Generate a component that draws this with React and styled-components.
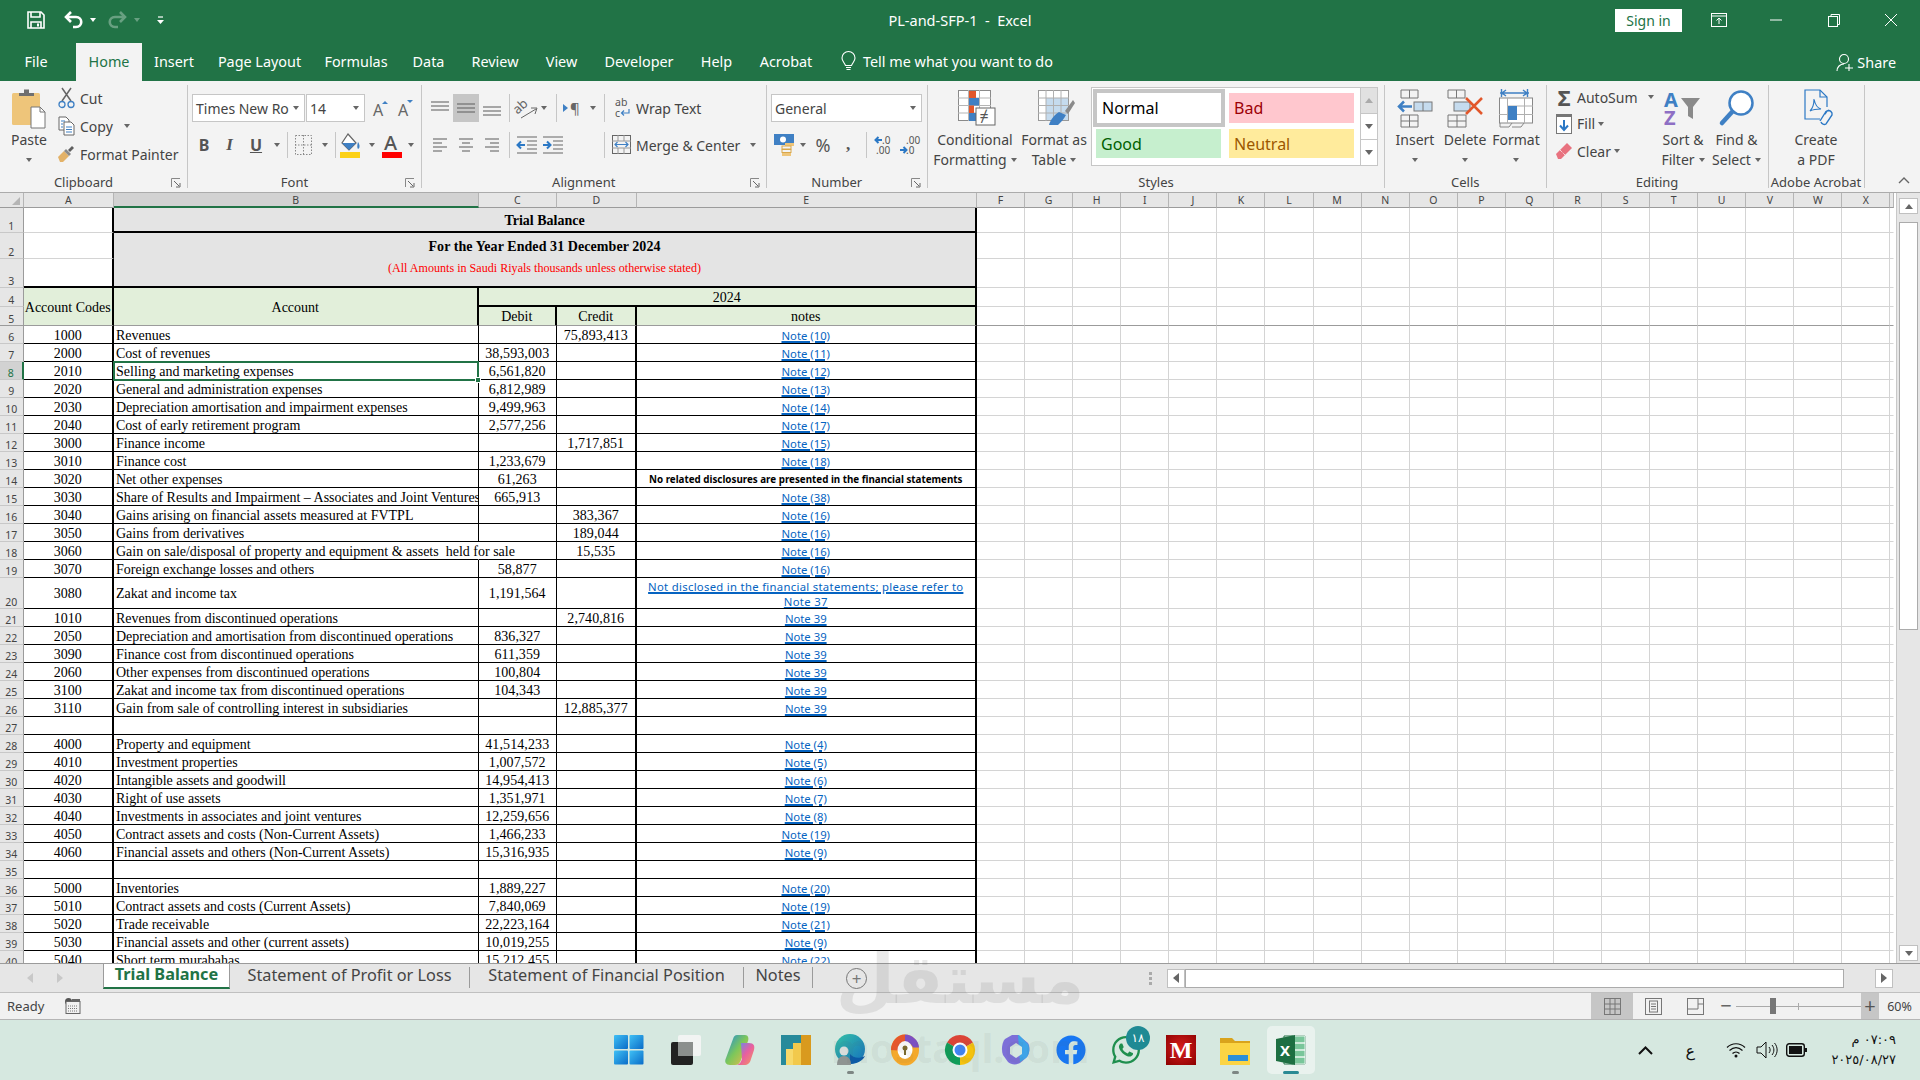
import React from 'react'
import styled, { createGlobalStyle } from 'styled-components'
import { FaFacebook, FaWhatsapp } from 'react-icons/fa'

const UI = `"Noto Sans", "Open Sans", sans-serif`
const SERIF = `"Liberation Serif", "Times New Roman", serif`
const GREEN = '#217346'

const Global = createGlobalStyle`
	html, body { margin: 0; padding: 0; background: #fff; overflow: hidden; }
	#root { width: 1920px; height: 1080px; }
	* { box-sizing: border-box; }
`

const Frame = styled.div`
	position: relative;
	width: 1920px;
	height: 1080px;
	overflow: hidden;
	display: flex;
	flex-direction: column;
	font-family: ${UI};
	color: #444;
`

/* ---------- title bar ---------- */

const TitleBar = styled.header`
	height: 43px;
	flex: none;
	padding-bottom: 3px;
	background: ${GREEN};
	display: grid;
	grid-template-columns: 1fr auto 1fr;
	align-items: center;
	color: #fff;
`
const Qat = styled.div`
	display: flex;
	align-items: center;
	padding-left: 24px;
`
const QatBtn = styled.div`
	width: ${p => p.$w}px;
	margin-left: ${p => p.$ml || 0}px;
	display: flex;
	justify-content: center;
	align-items: center;
	opacity: ${p => (p.$dim ? 0.32 : 1)};
`
const TitleText = styled.div`
	font-size: 14.5px;
	white-space: pre;
`
const WindowBar = styled.div`
	display: flex;
	justify-content: flex-end;
	align-items: center;
`
const SignIn = styled.div`
	width: 67px;
	height: 23px;
	margin-right: 8px;
	background: #fff;
	color: ${GREEN};
	font-size: 14px;
	display: flex;
	align-items: center;
	justify-content: center;
`
const WinBtn = styled.div`
	width: 57.5px;
	display: flex;
	justify-content: center;
`

/* ---------- ribbon tabs ---------- */

const TabBar = styled.nav`
	height: 38px;
	flex: none;
	background: ${GREEN};
	display: flex;
	align-items: stretch;
	color: #fff;
	font-size: 14.4px;
`
const RibbonTab = styled.div`
	width: ${p => p.$w}px;
	padding: 0 ${p => p.$pr || 0}px 2px 0;
	display: flex;
	align-items: center;
	justify-content: center;
	background: ${p => (p.$active ? '#f3f3f3' : 'transparent')};
	color: ${p => (p.$active ? GREEN : '#fff')};
`
const TellMe = styled.div`
	display: flex;
	align-items: center;
	gap: 7px;
	margin-left: 15px;
	padding-bottom: 2px;
`
const Share = styled.div`
	margin-left: auto;
	margin-right: 24px;
	display: flex;
	align-items: center;
	gap: 3px;
	padding-top: 1px;
`

/* ---------- ribbon ---------- */

const Ribbon = styled.div`
	height: 112px;
	flex: none;
	background: #f3f3f3;
	border-bottom: 1px solid #ababab;
	display: flex;
	padding-top: 4px;
	font-size: 14px;
	color: #444;
`
const Group = styled.section`
	flex: none;
	width: ${p => p.$w}px;
	height: 103px;
	border-right: 1px solid #c6c6c6;
	display: flex;
	flex-direction: column;
`
const GroupBody = styled.div`
	flex: 1;
	min-height: 0;
	display: flex;
	padding-left: ${p => p.$pl || 0}px;
`
const GroupLabel = styled.div`
	position: relative;
	height: 18px;
	margin-bottom: -3px;
	padding-right: ${p => (p.$launcher ? 20 : 0)}px;
	text-align: center;
	font-size: 13px;
	line-height: 18px;
	white-space: nowrap;
`
const Launcher = styled.svg`
	position: absolute;
	right: 6px;
	top: 5px;
`
const Large = styled.div`
	flex: none;
	width: ${p => p.$w}px;
	display: flex;
	flex-direction: column;
	align-items: center;
	padding-top: 3px;
	line-height: 20px;
	white-space: nowrap;
`
const LargeIcon = styled.div`
	height: 40px;
	margin-bottom: 2px;
	padding-left: ${p => p.$pl || 0}px;
	display: flex;
	align-items: center;
	justify-content: center;
`
const TextLine = styled.div`
	height: 20px;
	display: flex;
	align-items: center;
	gap: 4px;
`
const SmallStack = styled.div`
	flex: none;
	width: ${p => p.$w}px;
	margin-top: -1px;
	padding-left: ${p => p.$pl}px;
	display: flex;
	flex-direction: column;
`
const SmallBtn = styled.div`
	height: ${p => p.$h || 28}px;
	margin-left: ${p => p.$ml || 0}px;
	display: flex;
	align-items: center;
	white-space: nowrap;
`
const SmallIcon = styled.div`
	width: 16px;
	margin-right: ${p => p.$mr ?? 6}px;
	display: flex;
	justify-content: center;
`
const Rows = styled.div`
	display: flex;
	flex-direction: column;
	padding-top: 9px;
	gap: 10px;
`
const Row = styled.div`
	height: ${p => p.$h}px;
	display: flex;
	align-items: center;
`
const Cell = styled.div`
	flex: none;
	width: ${p => p.$w}px;
	height: 100%;
	margin-left: ${p => p.$ml || 0}px;
	display: flex;
	align-items: center;
	justify-content: center;
	background: ${p => (p.$on ? '#c6c6c6' : 'transparent')};
`
const VSep = styled.div`
	flex: none;
	width: 1px;
	height: 100%;
	margin: 0 ${p => p.$mr || 0}px 0 ${p => p.$ml || 0}px;
	background: #c6c6c6;
`
const Caret = styled.span`
	flex: none;
	display: inline-block;
	width: 0;
	height: 0;
	margin-left: ${p => p.$ml || 0}px;
	margin-right: ${p => p.$mr || 0}px;
	border-left: 3.5px solid transparent;
	border-right: 3.5px solid transparent;
	border-top: 4px solid ${p => p.$color || '#666'};
`
const CaretCell = styled.div`
	flex: none;
	width: ${p => p.$w}px;
	display: flex;
	justify-content: center;
`
const Field = styled.div`
	flex: none;
	width: ${p => p.$w}px;
	height: 28px;
	margin-left: ${p => p.$ml || 0}px;
	background: #fff;
	border: 1px solid #c6c6c6;
	display: flex;
	align-items: center;
	justify-content: space-between;
	padding: 0 5px 0 3px;
	font-size: 14px;
`
const Glyph = styled.span`
	font-family: ${p => p.$serif ? SERIF : UI};
	font-weight: ${p => p.$bold ? 700 : 400};
	font-style: ${p => p.$italic ? 'italic' : 'normal'};
	text-decoration: ${p => p.$under ? 'underline' : 'none'};
	font-size: ${p => p.$size || 15}px;
	color: ${p => p.$color || '#555'};
`
const Gallery = styled.div`
	flex: none;
	width: 287px;
	height: 79px;
	margin: 2px 0 0 5px;
	border: 1px solid #c6c6c6;
	background: #fff;
	display: grid;
	grid-template-columns: 133px 135px 17px;
	grid-template-rows: 39px 38px;
`
const StyleCell = styled.div`
	padding: ${p => p.$pad};
	display: flex;
`
const StyleChip = styled.div`
	flex: 1;
	display: flex;
	align-items: center;
	padding-left: ${p => p.$pl || 5}px;
	font-size: 16px;
	background: ${p => p.$bg};
	color: ${p => p.$color};
	border: ${p => (p.$selected ? '4px solid #c6c6c6' : 'none')};
`
const GalleryScroll = styled.div`
	grid-column: 3;
	grid-row: 1 / span 2;
	border-left: 1px solid #c6c6c6;
	display: flex;
	flex-direction: column;
`
const GalleryBtn = styled.div`
	flex: 1;
	display: flex;
	align-items: center;
	justify-content: center;
	background: ${p => (p.$dim ? '#e1e1e1' : '#fff')};
	border-bottom: ${p => (p.$last ? 'none' : '1px solid #c6c6c6')};
`
const CollapseArea = styled.div`
	flex: 1;
	height: 103px;
	display: flex;
	align-items: flex-end;
	justify-content: flex-end;
	padding: 0 10px 4px 0;
`

/* ---------- sheet ---------- */

const SheetArea = styled.div`
	height: 770px;
	flex: none;
	display: flex;
	overflow: hidden;
	background: #fff;
`
const SheetGrid = styled.div`
	flex: none;
	width: 1896px;
	display: grid;
	grid-template-columns: 23.5px 90.5px 364.5px 78.5px 79.5px 340.5px repeat(19, 48.08px) 4px;
	grid-template-rows: 15px 25px 26px 29px 19px 19px repeat(14, 18px) 31px repeat(20, 18px);
	font-family: ${SERIF};
	font-size: 14px;
	color: #000;
`
const line = {
	grid: '1px solid #d4d4d4',
	thin: '1px solid #000',
	thick: '2px solid #000',
	none: '1px solid transparent',
	freeze: '1px solid #9b9b9b'
}
const Cols = styled.div`
	background: ${p => (p.$on ? '#d2d2d2' : '#e6e6e6')};
	border-right: 1px solid #b5b5b5;
	border-bottom: ${p => (p.$on ? `2px solid ${GREEN}` : '1px solid #9b9b9b')};
	color: #444;
	font-family: ${UI};
	font-size: 10.5px;
	display: flex;
	align-items: center;
	justify-content: center;
	overflow: hidden;
`
const Corner = styled(Cols)`
	align-items: flex-end;
	justify-content: flex-end;
	padding: 0 3px 2px 0;
`
const RowHead = styled.div`
	background: ${p => (p.$on ? '#d2d2d2' : '#e6e6e6')};
	border-right: ${p => (p.$on ? `2px solid ${GREEN}` : '1px solid #9b9b9b')};
	border-bottom: ${p => (p.$freeze ? line.freeze : '1px solid #c8c8c8')};
	color: ${p => (p.$on ? GREEN : '#444')};
	font-family: ${UI};
	font-size: 10.5px;
	line-height: 12px;
	display: flex;
	align-items: flex-end;
	justify-content: center;
`
const SheetCell = styled.div`
	position: relative;
	min-width: 0;
	grid-column: ${p => (p.$cols ? `span ${p.$cols}` : 'auto')};
	grid-row: ${p => (p.$rows ? `span ${p.$rows}` : 'auto')};
	background: ${p => p.$bg || 'transparent'};
	border-right: ${p => line[p.$r || 'grid']};
	border-bottom: ${p => line[p.$b || 'grid']};
	display: flex;
	align-items: center;
	justify-content: ${p => (p.$left ? 'flex-start' : 'center')};
	padding: 2px 0 0 ${p => (p.$left ? 2 : 0)}px;
	font-weight: ${p => (p.$bold ? 700 : 400)};
	letter-spacing: ${p => (p.$num ? '0.1px' : '0')};
	white-space: pre;
	overflow: ${p => (p.$spill ? 'visible' : 'hidden')};
	z-index: ${p => (p.$spill ? 2 : 'auto')};
`
const SelectedCell = styled(SheetCell)`
	overflow: visible;
	z-index: 3;
`
const SelectionBox = styled.div`
	position: absolute;
	inset: -1px -1px -2px -1px;
	border: 2px solid ${GREEN};
	pointer-events: none;
`
const Handle = styled.div`
	position: absolute;
	right: -4px;
	bottom: -4px;
	width: 6px;
	height: 6px;
	background: ${GREEN};
	border: 1px solid #fff;
`
const TitleBlock = styled(SheetCell)`
	flex-direction: column;
	justify-content: flex-start;
	padding-top: 0;
`
const YearLine = styled.div`
	height: 26px;
	line-height: 27px;
	font-weight: 700;
	font-size: 14px;
	letter-spacing: 0.07px;
`
const AmountLine = styled.div`
	height: 18px;
	line-height: 18px;
	font-size: 12.1px;
	color: #f00;
`
const NoteLink = styled.span`
	font-family: ${UI};
	font-size: 11.3px;
	line-height: 15px;
	letter-spacing: ${p => (p.$wide ? '0.3px' : '0')};
	color: #0563c1;
	text-decoration: underline;
	text-decoration-thickness: 1.5px;
	text-underline-offset: 1px;
	text-align: center;
`
const NoteBold = styled.span`
	font-family: ${UI};
	font-size: 9.8px;
	font-weight: 700;
	color: #000;
`
const VScroll = styled.div`
	flex: 1;
	background: #e6e6e6;
	border-left: 1px solid #c8c8c8;
	display: flex;
	flex-direction: column;
	align-items: center;
	padding: 5px 0 2px 0;
`
const ScrollBtn = styled.div`
	flex: none;
	width: 19px;
	height: 16px;
	background: #fff;
	border: 1px solid #c0c0c0;
	display: flex;
	align-items: center;
	justify-content: center;
`
const VThumb = styled.div`
	flex: none;
	width: 19px;
	height: 408px;
	margin-top: 8px;
	background: #fff;
	border: 1px solid #ababab;
`
const Spacer = styled.div`
	flex: 1;
`

/* ---------- sheet tabs ---------- */

const SheetTabs = styled.div`
	height: 30px;
	flex: none;
	background: #e6e6e6;
	border-top: 1px solid #9b9b9b;
	border-bottom: 1px solid #c0c0c0;
	display: flex;
	align-items: center;
	font-size: 16.3px;
	color: #444;
`
const NavArrows = styled.div`
	width: 103px;
	flex: none;
	display: flex;
	justify-content: center;
	gap: 24px;
	padding-right: 14px;
`
const ActiveSheet = styled.div`
	width: 127px;
	height: 25px;
	align-self: flex-start;
	padding-bottom: 3px;
	background: #fff;
	border-left: 1px solid #9b9b9b;
	border-right: 1px solid #9b9b9b;
	border-bottom: 2px solid ${GREEN};
	color: ${GREEN};
	font-weight: 700;
	display: flex;
	align-items: center;
	justify-content: center;
	white-space: nowrap;
`
const SheetName = styled.div`
	flex: none;
	width: ${p => p.$w}px;
	height: 21px;
	align-self: flex-start;
	margin-top: 3px;
	padding-bottom: 5px;
	display: flex;
	align-items: center;
	justify-content: center;
	white-space: nowrap;
	border-right: ${p => (p.$sep ? '1px solid #9b9b9b' : 'none')};
`
const AddSheet = styled.div`
	margin-left: 33px;
	width: 21px;
	height: 21px;
	border: 1.5px solid #777;
	border-radius: 50%;
	color: #777;
	display: flex;
	align-items: center;
	justify-content: center;
	font-size: 17px;
	line-height: 1;
`
const Grabber = styled.div`
	margin-left: 282px;
	width: 3px;
	height: 13px;
	background: repeating-linear-gradient(#aaa 0 3px, transparent 3px 5px);
`
const HScroll = styled.div`
	margin-left: 15px;
	display: flex;
	align-items: center;
	height: 20px;
`
const HBtn = styled.div`
	width: 18px;
	height: 19px;
	background: #fff;
	border: 1px solid #c0c0c0;
	display: flex;
	align-items: center;
	justify-content: center;
`
const HThumb = styled.div`
	width: 659px;
	height: 19px;
	background: #fff;
	border: 1px solid #ababab;
	margin-right: 31px;
`
const LeftTri = styled.span`
	border-top: 5px solid transparent;
	border-bottom: 5px solid transparent;
	border-right: 6px solid ${p => p.$color || '#666'};
`
const RightTri = styled.span`
	border-top: 5px solid transparent;
	border-bottom: 5px solid transparent;
	border-left: 6px solid ${p => p.$color || '#666'};
`
const UpTri = styled.span`
	border-left: 4px solid transparent;
	border-right: 4px solid transparent;
	border-bottom: 5px solid ${p => p.$color || '#666'};
`
const DownTri = styled.span`
	border-left: 4px solid transparent;
	border-right: 4px solid transparent;
	border-top: 5px solid ${p => p.$color || '#666'};
`

/* ---------- status bar ---------- */

const StatusBar = styled.footer`
	height: 27px;
	flex: none;
	background: #f1f1f1;
	border-bottom: 1px solid #b5b5b5;
	display: flex;
	align-items: stretch;
	font-size: 13px;
	color: #444;
`
const Ready = styled.div`
	padding-left: 7px;
	width: 65px;
	display: flex;
	align-items: center;
`
const ViewBtn = styled.div`
	width: ${p => p.$w}px;
	flex: none;
	display: flex;
	align-items: center;
	justify-content: center;
	background: ${p => (p.$on ? '#c6c6c6' : 'transparent')};
	color: #666;
	line-height: 1;
`
const ZoomTrack = styled.div`
	position: relative;
	width: 125px;
	flex: none;
	align-self: center;
	height: 1px;
	background: #aaa;
`
const ZoomThumb = styled.div`
	position: absolute;
	left: 34px;
	top: -8px;
	width: 6px;
	height: 16px;
	background: #777;
`
const ZoomTick = styled.div`
	position: absolute;
	left: 62px;
	top: -3px;
	width: 1px;
	height: 7px;
	background: #aaa;
`
const ZoomPct = styled.div`
	width: 41px;
	display: flex;
	align-items: center;
	justify-content: center;
	font-size: 12.5px;
`

/* ---------- taskbar ---------- */

const Taskbar = styled.div`
	height: 60px;
	flex: none;
	background: #d6e8e0;
	display: flex;
	align-items: center;
	padding-left: 605px;
	color: #111;
`
const TaskIcon = styled.div`
	position: relative;
	flex: none;
	width: 48px;
	height: 48px;
	margin-right: ${p => p.$mr ?? 7}px;
	display: flex;
	align-items: center;
	justify-content: center;
	border-radius: 5px;
	background: ${p => (p.$on ? '#e9f2ee' : 'transparent')};
`
const Dot = styled.span`
	position: absolute;
	bottom: 0;
	left: 50%;
	width: ${p => (p.$wide ? 16 : 7)}px;
	height: 3px;
	margin-left: ${p => (p.$wide ? -8 : -3.5)}px;
	border-radius: 2px;
	background: ${p => (p.$wide ? '#2a8a94' : '#7d8683')};
`
const Badge = styled.span`
	position: absolute;
	right: 0;
	top: 0;
	width: 24px;
	height: 24px;
	border-radius: 50%;
	background: #1f8a94;
	color: #fff;
	font-family: "DejaVu Sans", sans-serif;
	font-size: 12px;
	display: flex;
	align-items: center;
	justify-content: center;
`
const MLogo = styled.div`
	width: 30px;
	height: 30px;
	background: radial-gradient(circle at 50% 45%, #d81e1e, #8c0000);
	color: #fff;
	font-family: ${SERIF};
	font-weight: 700;
	font-size: 24px;
	display: flex;
	align-items: center;
	justify-content: center;
`
const Tray = styled.div`
	margin-left: auto;
	display: flex;
	align-items: center;
	padding-right: 24px;
`
const TrayLang = styled.div`
	font-family: "DejaVu Sans", sans-serif;
	font-size: 16px;
	margin: 0 26px 0 32px;
`
const TrayIcon = styled.div`
	width: 30px;
	display: flex;
	justify-content: center;
`
const Clock = styled.div`
	width: 85px;
	direction: rtl;
	font-family: "DejaVu Sans", "Noto Sans", sans-serif;
	font-size: 13px;
	line-height: 20px;
	text-align: right;
`

/* ---------- watermark ---------- */

const Watermark = styled.div`
	position: absolute;
	left: 760px;
	top: 940px;
	width: 400px;
	display: flex;
	flex-direction: column;
	align-items: center;
	color: rgba(90, 90, 90, 0.13);
	pointer-events: none;
	z-index: 9;
`
const WatermarkAr = styled.div`
	font-family: "DejaVu Sans", sans-serif;
	font-weight: 700;
	font-size: 68px;
	line-height: 80px;
`
const WatermarkEn = styled.div`
	margin-top: 6px;
	font-family: "Noto Sans", sans-serif;
	font-weight: 700;
	font-size: 40px;
	line-height: 44px;
	color: rgba(90, 90, 90, 0.08);
`

/* ---------- drawings ---------- */

const Svg = ({ w, h, vb, children }) => (
	<svg width={w} height={h} viewBox={vb || `0 0 ${w} ${h}`} fill="none" style={{ overflow: 'visible' }}>{children}</svg>
)

const SaveIcon = () => (
	<Svg w={18} h={18}>
		<path d="M1 1h13l3 3v13H1z" stroke="#fff" strokeWidth="1.6" />
		<path d="M4 1v5h9V1M4 17v-6h10v6" stroke="#fff" strokeWidth="1.6" />
		<rect x="10" y="12.5" width="2" height="3" fill="#fff" />
	</Svg>
)
const UndoIcon = ({ color = '#fff' }) => (
	<Svg w={20} h={18}>
		<path d="M7 1 2 6l5 5" stroke={color} strokeWidth="2.6" />
		<path d="M2.5 6H12c7 0 7 10 0 10H9" stroke={color} strokeWidth="2.6" />
	</Svg>
)
const RedoIcon = ({ color = '#fff' }) => (
	<Svg w={20} h={18}>
		<path d="m13 1 5 5-5 5" stroke={color} strokeWidth="2.6" />
		<path d="M17.5 6H8c-7 0-7 10 0 10h3" stroke={color} strokeWidth="2.6" />
	</Svg>
)
const QatMore = () => (
	<Svg w={7} h={8}>
		<path d="M1 1h5" stroke="#fff" strokeWidth="1.2" />
		<path d="M0 4h7L3.5 8z" fill="#fff" />
	</Svg>
)
const RibbonDisplay = () => (
	<Svg w={16} h={14}>
		<rect x=".5" y=".5" width="15" height="13" stroke="#fff" />
		<path d="M0 3h16" stroke="#fff" />
		<path d="M8 11V5M5.5 7.5 8 5l2.5 2.5" stroke="#fff" />
	</Svg>
)
const MinIcon = () => <Svg w={12} h={2}><path d="M0 1h12" stroke="#fff" /></Svg>
const RestoreIcon = () => (
	<Svg w={12} h={13}>
		<rect x=".5" y="2.5" width="9" height="10" stroke="#fff" />
		<path d="M3 2.5V.5h8.500v10H9.500" stroke="#fff" />
	</Svg>
)
const CloseIcon = () => <Svg w={12} h={12}><path d="m0 0 12 12M12 0 0 12" stroke="#fff" /></Svg>
const Bulb = () => (
	<Svg w={15} h={21}>
		<path d="M4.500 14.500C3 11 1 10 1 7a6.500 6.500 0 0 1 13 0c0 3-2 4-3.500 7.500z" stroke="#fff" strokeWidth="1.1" />
		<path d="M5 16.500h5M5.500 18.500h4" stroke="#fff" strokeWidth="1.2" />
	</Svg>
)
const PersonPlus = () => (
	<Svg w={18} h={19}>
		<circle cx="8" cy="6" r="4.500" stroke="#fff" strokeWidth="1.1" />
		<path d="M1 18c0-4 3-7 7-7M9 15h8M13 11v7" stroke="#fff" strokeWidth="1.1" />
	</Svg>
)
const PasteIcon = () => (
	<Svg w={36} h={40}>
		<rect x="1" y="5" width="28" height="32" rx="1.500" fill="#eec57a" />
		<path d="M8 8V5h5V1.500h5V5h5v3z" fill="#6f6f6f" />
		<path d="M20 19h9l5 5v16H20z" fill="#fff" stroke="#777" />
		<path d="M29 19v5h5" stroke="#777" />
	</Svg>
)
const CutIcon = () => (
	<Svg w={17} h={22}>
		<path d="M4 14 13 1M13 14 4 1" stroke="#666" strokeWidth="1.500" />
		<circle cx="4" cy="17.500" r="3" stroke="#3f80c4" strokeWidth="1.300" />
		<circle cx="13" cy="17.500" r="3" stroke="#3f80c4" strokeWidth="1.300" />
	</Svg>
)
const CopyIcon = () => (
	<Svg w={17} h={20}>
		<path d="M1 1h7l3 3v10H1z" fill="#fff" stroke="#666" />
		<path d="M6 6h7l3 3v10H6z" fill="#fff" stroke="#666" />
		<path d="M3 5h4M3 8h2M3 11h2M8 11h6M8 13.500h6M8 16h6" stroke="#3f80c4" />
	</Svg>
)
const BrushIcon = () => (
	<Svg w={18} h={18}>
		<path d="m1 12 6-6 5 5-6 6H3z" fill="#e3b268" />
		<path d="m7 6 2-2 5 5-2 2z" fill="#8a8a8a" />
		<path d="m11 5 4-4 2 2-4 4z" fill="#5f5f5f" />
	</Svg>
)
const GrowFont = ({ up }) => (
	<Svg w={18} h={18}>
		<text x="1" y="17" fontSize="16" fontFamily={UI} fill="#666">A</text>
		{up
			? <path d="m10 5 3-3 3 3z" fill="#3f80c4" />
			: <path d="m10 1 3 3 3-3z" fill="#3f80c4" />}
	</Svg>
)
const AlignLines = ({ rows, w = 20, h = 18 }) => (
	<Svg w={w} h={h}>
		{rows.map(([a, b, y], i) => <path key={i} d={`M${a} ${y}H${b}`} stroke="#666" strokeWidth="1.100" />)}
	</Svg>
)
const BordersIcon = () => (
	<Svg w={18} h={21}>
		<rect x=".5" y=".5" width="16" height="19" stroke="#888" strokeDasharray="1.500 1.500" />
		<path d="M8.500 0v20M0 10h17" stroke="#888" strokeDasharray="1.500 1.500" />
	</Svg>
)
const FillIcon = () => (
	<Svg w={21} h={25}>
		<path d="M8 1 16 10 9 17 2 10z" fill="#fff" stroke="#666" strokeWidth="1.200" />
		<path d="M2 10h14l-7 7z" fill="#3f80c4" />
		<path d="M18 9c2 3 2 6 0 7-1-1-1-4 0-7" fill="#3f80c4" />
		<rect x="0" y="19" width="20" height="6" fill="#fcd116" />
	</Svg>
)
const FontColorIcon = () => (
	<Svg w={20} h={25}>
		<text x="2" y="17" fontSize="20" fontFamily={UI} fontWeight="500" fill="#555">A</text>
		<rect x="0" y="19" width="20" height="6" fill="#f00" />
	</Svg>
)
const OrientIcon = () => (
	<Svg w={26} h={24}>
		<text x="0" y="14" fontSize="13" fontFamily={UI} fill="#666" transform="rotate(-42 8 12)">ab</text>
		<path d="m7 22 15-9M21 18l2-6-6 0" stroke="#666" />
	</Svg>
)
const ParaIcon = () => (
	<Svg w={20} h={14}>
		<path d="M0 3l5 4-5 4z" fill="#3f80c4" />
		<text x="7" y="13" fontSize="15" fontFamily={UI} fill="#666">¶</text>
	</Svg>
)
const WrapIcon = () => (
	<Svg w={16} h={22}>
		<text x="1" y="9" fontSize="10.500" fontFamily={UI} fill="#555">ab</text>
		<text x="1" y="20" fontSize="10.500" fontFamily={UI} fill="#555">c</text>
		<path d="M15 12v4H8M10 13.500 7.500 16l2.500 2.500" stroke="#3f80c4" strokeWidth="1.200" />
	</Svg>
)
const MergeIcon = () => (
	<Svg w={20} h={20}>
		<rect x=".5" y=".5" width="18" height="18" stroke="#666" />
		<path d="M0 6h19M0 13h19M6 0v6M12 0v6M6 13v6M12 13v6" stroke="#999" />
		<rect x="2" y="7" width="15" height="5" fill="#f3f3f3" />
		<path d="M3 9.500h13M5.500 7 3 9.500 5.500 12M13.500 7 16 9.500 13.500 12" stroke="#3f80c4" strokeWidth="1.200" />
	</Svg>
)
const IndentIcon = ({ flip }) => (
	<Svg w={20} h={20}>
		<path d="M0 2h20M10 6h10M10 10h10M10 14h10M0 18h20" stroke="#666" strokeWidth="1.100" />
		{flip
			? <path d="M0 10h7M4 6.500 7.500 10 4 13.500" stroke="#2b78c5" strokeWidth="2" />
			: <path d="M8 10H1M4 6.500.5 10 4 13.500" stroke="#2b78c5" strokeWidth="2" />}
	</Svg>
)
const CurrencyIcon = () => (
	<Svg w={20} h={23}>
		<rect x="0" y="0" width="20" height="11" fill="#3f80c4" />
		<circle cx="9" cy="5.500" r="3" fill="#fff" />
		<rect x="11" y="9" width="9" height="3" fill="#eec57a" />
		<rect x="8" y="12" width="9" height="3" fill="#f3f3f3" stroke="#d9a74a" />
		<rect x="8" y="15.500" width="9" height="3" fill="#f3f3f3" stroke="#d9a74a" />
		<rect x="8" y="19" width="9" height="3" fill="#eec57a" />
	</Svg>
)
const DecimalIcon = ({ more }) => (
	<Svg w={20} h={20}>
		<text x={more ? 8 : 7} y="8.500" fontSize="10" fontFamily={UI} fill="#555">{more ? '.0' : '.00'}</text>
		<text x={more ? 2 : 7} y="19" fontSize="10" fontFamily={UI} fill="#555">{more ? '.00' : '.0'}</text>
		{more
			? <path d="M8 5H2M4.500 2 1.500 5l3 3" stroke="#2b78c5" strokeWidth="2" />
			: <path d="M1 15h6M4.500 12l3 3-3 3" stroke="#2b78c5" strokeWidth="2" />}
	</Svg>
)
const CondIcon = () => (
	<Svg w={38} h={36}>
		<rect x=".5" y=".5" width="32" height="30" fill="#fff" stroke="#8a8a8a" />
		<path d="M0 8h33M0 15.500h33M0 23h33M10.500 0v31M21.500 0v31" stroke="#b5b5b5" />
		<rect x="11" y="1" width="7" height="7" fill="#e2572b" />
		<rect x="11" y="8" width="10" height="7.500" fill="#3f80c4" />
		<rect x="11" y="15.500" width="5" height="7.500" fill="#e2572b" />
		<rect x="11" y="23" width="7" height="8" fill="#3f80c4" />
		<rect x="18" y="18" width="19" height="17" fill="#fff" stroke="#666" />
		<text x="21.500" y="32" fontSize="16" fontFamily={UI} fill="#555">≠</text>
	</Svg>
)
const FormatTableIcon = () => (
	<Svg w={38} h={36}>
		<rect x=".5" y=".5" width="30" height="30" fill="#fff" stroke="#999" />
		<rect x="8" y="8" width="22" height="22" fill="#c5dbee" />
		<path d="M0 8h31M0 15.500h31M0 23h31M8 0v31M15.500 0v31M23 0v31" stroke="#b0b0b0" />
		<path d="m27 21 8-11 2 3-7 11z" fill="#8a8a8a" />
		<path d="M11 35c1-5 6-11 10-13l7 3c-2 4-5 7-8 10z" fill="#3f80c4" />
	</Svg>
)
const InsertCellsIcon = () => (
	<Svg w={36} h={38}>
		<path d="M4 1h17v8H4zM12.500 1v8M4 26h17v12H4zM4 32h17M12.500 26v12" stroke="#777" />
		<rect x="17" y="13" width="18" height="9" fill="#c5dbee" stroke="#777" />
		<path d="M26 13v9" stroke="#777" />
		<path d="M15 17.500H2M7 12.500l-5 5 5 5" stroke="#3f80c4" strokeWidth="2.500" />
	</Svg>
)
const DeleteCellsIcon = () => (
	<Svg w={36} h={38}>
		<path d="M1 1h17v8H1zM9.500 1v8M1 26h18v12H1zM1 32h18M10 26v12" stroke="#777" />
		<rect x="7" y="13" width="16" height="9" fill="#c5dbee" stroke="#777" />
		<path d="m19 9 16 16M35 9 19 25" stroke="#e2572b" strokeWidth="2.500" />
	</Svg>
)
const FormatCellsIcon = () => (
	<Svg w={34} h={40}>
		<path d="M1 5h29M2.500 1v8M28.500 1v8M7 2 3 5l4 3M24 2l4 3-4 3" stroke="#3f80c4" strokeWidth="1.400" />
		<rect x=".5" y="10" width="33" height="25" fill="#fff" stroke="#888" />
		<path d="M8.500 10v25M25.500 10v25M8 18h26M0 26.500h34" stroke="#b0b0b0" />
		<rect x="9" y="18" width="9" height="14" fill="#3f80c4" />
		<path d="M1 35v4h9l3-4M13 39h9l3-4" stroke="#888" />
	</Svg>
)
const FillDown = () => (
	<Svg w={16} h={20}>
		<rect x=".5" y=".5" width="15" height="19" fill="#fff" stroke="#777" />
		<rect x="0" y="0" width="16" height="3" fill="#777" />
		<path d="M8 6v10M4 11.500l4 4.500 4-4.500" stroke="#2b78c5" strokeWidth="2" />
	</Svg>
)
const EraserIcon = () => (
	<Svg w={18} h={18}>
		<path d="m1 12 11-11 5 5L6 17H3z" fill="#e8727f" />
		<path d="m5 8 5 5" stroke="#fff" strokeDasharray="1 1" />
	</Svg>
)
const SortIcon = () => (
	<Svg w={38} h={36}>
		<text x="0" y="17" fontSize="20" fontWeight="700" fontFamily={UI} fill="#3f80c4">A</text>
		<text x="0" y="35" fontSize="20" fontWeight="700" fontFamily={UI} fill="#8e6fc4">Z</text>
		<path d="M17 8h19l-7 9v12l-5-3v-9z" fill="#8a8a8a" />
	</Svg>
)
const FindIcon = () => (
	<Svg w={36} h={38}>
		<circle cx="22" cy="14" r="11.500" fill="#fff" stroke="#3f80c4" strokeWidth="2.500" />
		<path d="M13 23 3 34" stroke="#3f80c4" strokeWidth="4.500" strokeLinecap="round" />
	</Svg>
)
const PdfIcon = () => (
	<Svg w={33} h={38}>
		<path d="M17 30H2V1h15l7 7v10" stroke="#2b78c5" strokeWidth="1.200" />
		<path d="M17 1v7h7" stroke="#2b78c5" strokeWidth="1.200" />
		<path d="M7 22c3-3 4-7 4-12 1 5 3 9 7 10-4 0-7 0-11 2z" stroke="#2b78c5" strokeWidth="1.100" />
		<path d="M18 33a3.500 3.500 0 0 0 5 2l6-9a3.500 3.500 0 0 0-5-4l-2 3M27 22a3.500 3.500 0 0 0-5 2l-5 8" stroke="#2b78c5" strokeWidth="1.400" />
	</Svg>
)
const LauncherIcon = () => (
	<Launcher width="10" height="10" viewBox="0 0 10 10" fill="none">
		<path d="M.5 9V.5H9" stroke="#888" />
		<path d="m3 3 5 5M9 5v4H5" stroke="#666" />
	</Launcher>
)
const Chevron = () => <Svg w={12} h={7}><path d="m1 6 5-5 5 5" stroke="#666" strokeWidth="1.400" /></Svg>
const MacroIcon = () => (
	<Svg w={16} h={16}>
		<circle cx="3.500" cy="3.500" r="3.500" fill="#555" />
		<rect x="1" y="3.500" width="14" height="12" fill="#f1f1f1" stroke="#666" />
		<rect x="7" y="1" width="8" height="3" fill="#666" />
		<path d="M3 8h10M3 10.500h10M3 13h10" stroke="#777" strokeDasharray="1 1" />
	</Svg>
)
const NormalView = () => (
	<Svg w={17} h={17}>
		<rect x=".5" y=".5" width="16" height="16" stroke="#777" />
		<path d="M0 6h17M0 11h17M6 0v17M11 0v17" stroke="#777" />
	</Svg>
)
const PageView = () => (
	<Svg w={17} h={17}>
		<rect x=".5" y=".5" width="16" height="16" stroke="#777" />
		<rect x="4.500" y="3" width="8" height="11" stroke="#777" />
		<path d="M6 6h5M6 8.500h5M6 11h5" stroke="#777" />
	</Svg>
)
const BreakView = () => (
	<Svg w={17} h={17}>
		<rect x=".5" y=".5" width="16" height="16" stroke="#777" />
		<path d="M0 11h11V0" stroke="#777" />
		<path d="M11 6h6" stroke="#777" />
	</Svg>
)

const StartIcon = () => (
	<Svg w={30} h={30}>
		<defs>
			<linearGradient id="st" x1="0" y1="0" x2="1" y2="1">
				<stop offset="0" stopColor="#3fc0f5" />
				<stop offset="1" stopColor="#0a6cc8" />
			</linearGradient>
		</defs>
		<rect x="0" y="0" width="14" height="14" rx="1" fill="url(#st)" />
		<rect x="15.500" y="0" width="14" height="14" rx="1" fill="url(#st)" />
		<rect x="0" y="15.500" width="14" height="14" rx="1" fill="url(#st)" />
		<rect x="15.500" y="15.500" width="14" height="14" rx="1" fill="url(#st)" />
	</Svg>
)
const TaskViewIcon = () => (
	<Svg w={30} h={30}>
		<rect x="0" y="7" width="22" height="23" rx="2" fill="#222" />
		<rect x="7" y="0" width="23" height="21" rx="2" fill="#f2f4f3" />
		<rect x="7" y="7" width="15" height="14" fill="#8b8f8d" />
	</Svg>
)
const CopilotIcon = () => (
	<Svg w={30} h={30}>
		<defs>
			<linearGradient id="co1" x1="0" y1="0" x2="1" y2="1">
				<stop offset="0" stopColor="#1a8be0" />
				<stop offset=".5" stopColor="#7dc75a" />
				<stop offset="1" stopColor="#f0b94a" />
			</linearGradient>
			<linearGradient id="co2" x1="0" y1="0" x2="1" y2="1">
				<stop offset="0" stopColor="#5a8ff0" />
				<stop offset=".5" stopColor="#e85fa0" />
				<stop offset="1" stopColor="#f59a5a" />
			</linearGradient>
		</defs>
		<path d="M12 0h8c3 0 4 3 3 6l-7 19c-1 3-3 5-6 5H5c-4 0-6-3-4-7L8 4c1-3 2-4 4-4z" fill="url(#co1)" />
		<path d="M16 8h8c5 0 6 3 5 7l-3 9c-1 4-3 6-7 6h-7c3-1 4-3 5-6z" fill="url(#co2)" />
	</Svg>
)
const PowerBiIcon = () => (
	<Svg w={30} h={30}>
		<rect x="0" y="0" width="30" height="30" fill="#278a9b" />
		<rect x="5" y="14" width="10" height="16" fill="#f7d96a" />
		<rect x="12" y="8" width="10" height="22" fill="#f2c94c" />
		<rect x="20" y="0" width="10" height="30" fill="#d99a1e" />
	</Svg>
)
const EdgeIcon = () => (
	<Svg w={30} h={32}>
		<defs>
			<linearGradient id="ed" x1="0" y1="0" x2="1" y2="1">
				<stop offset="0" stopColor="#35c1a5" />
				<stop offset="1" stopColor="#1470c0" />
			</linearGradient>
		</defs>
		<circle cx="15" cy="15" r="15" fill="url(#ed)" />
		<path d="M15 30c8 0 13-4 15-8-6 3-12 2-15-2z" fill="#0c5aa6" />
		<circle cx="9" cy="17" r="4.500" fill="#d9dcda" />
		<path d="M2 31c0-6 3-9 7-9s7 3 7 9z" fill="#8f9492" />
	</Svg>
)
const ShieldRingIcon = () => (
	<Svg w={30} h={32}>
		<ellipse cx="15" cy="16" rx="14" ry="15.500" fill="#f4a92b" />
		<path d="M15 .5c7 0 14 6 14 13h-6c-1-3-4-5-8-5z" fill="#7c4fc2" />
		<path d="M1 16C1 8 7 .5 15 .5v8c-4 0-7 4-7 8z" fill="#e5572c" />
		<ellipse cx="15" cy="16" rx="7.500" ry="9" fill="#fff" />
		<circle cx="15" cy="14" r="2.500" fill="#7b6a2e" />
		<path d="M14 15h2v6h-2z" fill="#7b6a2e" />
	</Svg>
)
const ChromeIcon = () => (
	<Svg w={30} h={30}>
		<path d="M2 7.500a15 15 0 0 1 26 0L15 15z" fill="#db4437" />
		<path d="M28 7.500A15 15 0 0 1 15 30V15z" fill="#f4c20d" />
		<path d="M15 30A15 15 0 0 1 2 7.500L15 15z" fill="#0f9d58" />
		<circle cx="15" cy="15" r="7.500" fill="#fff" />
		<circle cx="15" cy="15" r="5.500" fill="#4285f4" />
	</Svg>
)
const HexAppIcon = () => (
	<Svg w={28} h={30}>
		<path d="M10 0h6l10 8c2 3 2 10-1 14l-7 6c-3 2-9 2-12-1L1 20C-1 15 0 7 3 4z" fill="#7c6fd8" />
		<path d="M16 0h1l9 9c2 4 2 10-2 14l-6 4z" fill="#3fa4e8" />
		<path d="M14 8l6 4v7l-6 4-6-4v-7z" fill="#d6e8e0" />
	</Svg>
)
const FolderIcon = () => (
	<Svg w={30} h={30}>
		<path d="M0 3h12l3 3h15v24H0z" fill="#d9a31c" />
		<rect x="0" y="8" width="30" height="22" fill="#fbd444" />
		<rect x="8" y="20" width="20" height="6" fill="#2c8fd8" />
	</Svg>
)
const ExcelLogo = () => (
	<Svg w={30} h={30}>
		<path d="M8 1h21v28H8z" fill="#fff" stroke="#1f7145" />
		<path d="M17 1h12v7H17zM17 8h12v7H17zM17 15h12v7H17zM17 22h12v7H17z" fill="#79c69a" stroke="#fff" strokeWidth=".8" />
		<path d="M0 4 19 0v30L0 26z" fill="#1d6f42" />
		<text x="4" y="21" fontSize="15" fontWeight="700" fontFamily={UI} fill="#fff">X</text>
	</Svg>
)
const WifiIcon = () => (
	<Svg w={20} h={16}>
		<path d="M1 5.500c5-5 13-5 18 0M3.500 8.500c4-3.500 9-3.500 13 0M6.500 11.500c2-2 5-2 7 0" stroke="#111" strokeWidth="1.200" />
		<circle cx="10" cy="14" r="1.500" fill="#111" />
	</Svg>
)
const SpeakerIcon = () => (
	<Svg w={21} h={18}>
		<path d="M1 6h4l5-5v16l-5-5H1z" stroke="#111" />
		<path d="M13 6c1.500 2 1.500 4 0 6M16 4c2.500 3 2.500 7 0 10M18.500 2c3.500 4 3.500 10 0 14" stroke="#111" />
	</Svg>
)
const BatteryIcon = () => (
	<Svg w={21} h={14}>
		<rect x=".7" y=".7" width="17.600" height="12.600" rx="2.500" stroke="#111" strokeWidth="1.400" />
		<rect x="3" y="3" width="13" height="8" fill="#111" />
		<rect x="19" y="5" width="2" height="4" fill="#111" />
	</Svg>
)
const TrayCaret = () => <Svg w={15} h={9}><path d="m1 8 6.500-6.500L14 8" stroke="#111" strokeWidth="2" /></Svg>

/* ---------- data ---------- */

const tabs = [
	['File', 76, false, 4], ['Home', 66, true], ['Insert', 64], ['Page Layout', 107], ['Formulas', 86], ['Data', 59],
	['Review', 74], ['View', 59], ['Developer', 96], ['Help', 59], ['Acrobat', 80]
]

const columns = ['F', 'G', 'H', 'I', 'J', 'K', 'L', 'M', 'N', 'O', 'P', 'Q', 'R', 'S', 'T', 'U', 'V', 'W', 'X', '']

const N = n => `Note (${n})`

// code, account, debit, credit, note
const rows = [
	[1000, 'Revenues', '', '75,893,413', N(10)],
	[2000, 'Cost of revenues', '38,593,003', '', N(11)],
	[2010, 'Selling and marketing expenses', '6,561,820', '', N(12)],
	[2020, 'General and administration expenses', '6,812,989', '', N(13)],
	[2030, 'Depreciation amortisation and impairment expenses', '9,499,963', '', N(14)],
	[2040, 'Cost of early retirement program', '2,577,256', '', N(17)],
	[3000, 'Finance income', '', '1,717,851', N(15)],
	[3010, 'Finance cost', '1,233,679', '', N(18)],
	[3020, 'Net other expenses', '61,263', '', 'bold'],
	[3030, 'Share of Results and Impairment – Associates and Joint Ventures', '665,913', '', N(38)],
	[3040, 'Gains arising on financial assets measured at FVTPL', '', '383,367', N(16)],
	[3050, 'Gains from derivatives', '', '189,044', N(16)],
	[3060, 'Gain on sale/disposal of property and equipment & assets  held for sale', '', '15,535', N(16), true],
	[3070, 'Foreign exchange losses and others', '58,877', '', N(16)],
	[3080, 'Zakat and income tax', '1,191,564', '', 'long'],
	[1010, 'Revenues from discontinued operations', '', '2,740,816', 'Note 39'],
	[2050, 'Depreciation and amortisation from discontinued operations', '836,327', '', 'Note 39'],
	[3090, 'Finance cost from discontinued operations', '611,359', '', 'Note 39'],
	[2060, 'Other expenses from discontinued operations', '100,804', '', 'Note 39'],
	[3100, 'Zakat and income tax from discontinued operations', '104,343', '', 'Note 39'],
	[3110, 'Gain from sale of controlling interest in subsidiaries', '', '12,885,377', 'Note 39'],
	['', '', '', '', ''],
	[4000, 'Property and equipment', '41,514,233', '', N(4)],
	[4010, 'Investment properties', '1,007,572', '', N(5)],
	[4020, 'Intangible assets and goodwill', '14,954,413', '', N(6)],
	[4030, 'Right of use assets', '1,351,971', '', N(7)],
	[4040, 'Investments in associates and joint ventures', '12,259,656', '', N(8)],
	[4050, 'Contract assets and costs (Non-Current Assets)', '1,466,233', '', N(19)],
	[4060, 'Financial assets and others (Non-Current Assets)', '15,316,935', '', N(9)],
	['', '', '', '', ''],
	[5000, 'Inventories', '1,889,227', '', N(20)],
	[5010, 'Contract assets and costs (Current Assets)', '7,840,069', '', N(19)],
	[5020, 'Trade receivable', '22,223,164', '', N(21)],
	[5030, 'Financial assets and other (current assets)', '10,019,255', '', N(9)],
	[5040, 'Short term murabahas', '15,212,455', '', N(22)]
]

const GREY = '#e4e4e4'
const MINT = '#e2efda'

const Filler = ({ row, freeze }) => columns.map((c, i) => (
	<SheetCell key={`${row}-${i}`} $r={c ? 'grid' : 'none'} $b={freeze ? 'freeze' : 'grid'} />
))

const NoteCell = ({ note }) => {
	if (note === 'bold') return <NoteBold>No related disclosures are presented in the financial statements</NoteBold>
	if (note === 'long') {
		return (
			<NoteLink $wide>
				Not disclosed in the financial statements; please refer to{'\n'}Note 37
			</NoteLink>
		)
	}
	return note ? <NoteLink>{note}</NoteLink> : null
}

const DataRow = ({ row, index }) => {
	const [code, account, debit, credit, note, spill] = row
	const number = index + 6
	const AccountCell = number === 8 ? SelectedCell : SheetCell
	return (
		<>
			<RowHead $on={number === 8}>{number}</RowHead>
			<SheetCell $r="thick" $b="thin">{code}</SheetCell>
			<AccountCell $left $spill={spill} $r={spill ? 'none' : 'thin'} $b="thin">
				{account}
				{number === 8 && <SelectionBox><Handle /></SelectionBox>}
			</AccountCell>
			<SheetCell $num $r="thin" $b="thin">{debit}</SheetCell>
			<SheetCell $num $r="thick" $b="thin">{credit}</SheetCell>
			<SheetCell $r="thick" $b="thin"><NoteCell note={note} /></SheetCell>
			<Filler row={number} />
		</>
	)
}

const Sheet = () => (
	<SheetGrid>
		<Corner><Svg w={8} h={8}><path d="M8 0v8H0z" fill="#b5b5b5" /></Svg></Corner>
		<Cols>A</Cols>
		<Cols $on>B</Cols>
		<Cols>C</Cols>
		<Cols>D</Cols>
		<Cols>E</Cols>
		{columns.map((c, i) => <Cols key={i}>{c}</Cols>)}

		<RowHead>1</RowHead>
		<SheetCell $r="thick" />
		<SheetCell $cols={4} $bg={GREY} $r="thick" $b="thick" $bold>Trial Balance</SheetCell>
		<Filler row={1} />

		<RowHead>2</RowHead>
		<SheetCell $r="thick" />
		<TitleBlock $cols={4} $rows={2} $bg={GREY} $r="thick" $b="thick">
			<YearLine>For the Year Ended 31 December 2024</YearLine>
			<AmountLine>(All Amounts in Saudi Riyals thousands unless otherwise stated)</AmountLine>
		</TitleBlock>
		<Filler row={2} />

		<RowHead>3</RowHead>
		<SheetCell $r="thick" $b="thick" />
		<Filler row={3} />

		<RowHead>4</RowHead>
		<SheetCell $rows={2} $bg={MINT} $r="thick" $b="freeze">Account Codes</SheetCell>
		<SheetCell $rows={2} $bg={MINT} $r="thick" $b="freeze">Account</SheetCell>
		<SheetCell $cols={3} $bg={MINT} $r="thick" $b="thick">2024</SheetCell>
		<Filler row={4} />

		<RowHead $freeze>5</RowHead>
		<SheetCell $bg={MINT} $r="thick" $b="freeze">Debit</SheetCell>
		<SheetCell $bg={MINT} $r="thick" $b="freeze">Credit</SheetCell>
		<SheetCell $bg={MINT} $r="thick" $b="freeze">notes</SheetCell>
		<Filler row={5} freeze />

		{rows.map((row, i) => <DataRow key={i} row={row} index={i} />)}
	</SheetGrid>
)

export default function App() {
	return (
		<Frame>
			<Global />
			<TitleBar>
				<Qat>
					<QatBtn $w={24}><SaveIcon /></QatBtn>
					<QatBtn $w={24} $ml={14}><UndoIcon /></QatBtn>
					<QatBtn $w={14}><Caret $color="#fff" /></QatBtn>
					<QatBtn $w={24} $ml={5} $dim><RedoIcon /></QatBtn>
					<QatBtn $w={14} $ml={1} $dim><Caret $color="#fff" /></QatBtn>
					<QatBtn $w={16} $ml={8}><QatMore /></QatBtn>
				</Qat>
				<TitleText>PL-and-SFP-1  -  Excel</TitleText>
				<WindowBar>
					<SignIn>Sign in</SignIn>
					<WinBtn><RibbonDisplay /></WinBtn>
					<WinBtn><MinIcon /></WinBtn>
					<WinBtn><RestoreIcon /></WinBtn>
					<WinBtn><CloseIcon /></WinBtn>
				</WindowBar>
			</TitleBar>

			<TabBar>
				{tabs.map(([name, w, active, pr]) => <RibbonTab key={name} $w={w} $active={active} $pr={pr}>{name}</RibbonTab>)}
				<TellMe><Bulb />Tell me what you want to do</TellMe>
				<Share><PersonPlus />Share</Share>
			</TabBar>

			<Ribbon>
				<Group $w={188}>
					<GroupBody>
						<Large $w={58}>
							<LargeIcon><PasteIcon /></LargeIcon>
							<TextLine>Paste</TextLine>
							<TextLine><Caret /></TextLine>
						</Large>
						<SmallStack $w={129} $pl={0}>
							<SmallBtn><SmallIcon><CutIcon /></SmallIcon>Cut</SmallBtn>
							<SmallBtn><SmallIcon><CopyIcon /></SmallIcon>Copy<Caret $ml={11} /></SmallBtn>
							<SmallBtn><SmallIcon><BrushIcon /></SmallIcon>Format Painter</SmallBtn>
						</SmallStack>
					</GroupBody>
					<GroupLabel $launcher>Clipboard<LauncherIcon /></GroupLabel>
				</Group>

				<Group $w={234}>
					<GroupBody $pl={4}>
						<Rows>
							<Row $h={28}>
								<Field $w={113}>Times New Ro<Caret /></Field>
								<Field $w={59} $ml={1}>14<Caret /></Field>
								<Cell $w={25} $ml={3}><GrowFont up /></Cell>
								<Cell $w={25}><GrowFont /></Cell>
							</Row>
							<Row $h={26}>
								<Cell $w={24}><Glyph $bold $size={16}>B</Glyph></Cell>
								<Cell $w={27}><Glyph $italic $serif $bold $size={17}>I</Glyph></Cell>
								<Cell $w={26}><Glyph $under $bold $size={16}>U</Glyph></Cell>
								<CaretCell $w={15}><Caret /></CaretCell>
								<VSep $ml={3} />
								<Cell $w={32}><BordersIcon /></Cell>
								<CaretCell $w={10}><Caret /></CaretCell>
								<VSep $ml={5} />
								<Cell $w={28}><FillIcon /></Cell>
								<CaretCell $w={16}><Caret /></CaretCell>
								<Cell $w={24}><FontColorIcon /></Cell>
								<CaretCell $w={14}><Caret /></CaretCell>
							</Row>
						</Rows>
					</GroupBody>
					<GroupLabel $launcher>Font<LauncherIcon /></GroupLabel>
				</Group>

				<Group $w={344.5}>
					<GroupBody $pl={5}>
						<Rows>
							<Row $h={28}>
								<Cell $w={26}><AlignLines rows={[[1, 19, 3], [1, 19, 7], [1, 19, 11]]} /></Cell>
								<Cell $w={26} $on><AlignLines rows={[[1, 19, 5], [1, 19, 9], [1, 19, 13]]} /></Cell>
								<Cell $w={26}><AlignLines rows={[[1, 19, 8], [1, 19, 12], [1, 19, 16]]} /></Cell>
								<VSep $ml={4} $mr={4} />
								<Cell $w={26}><OrientIcon /></Cell>
								<CaretCell $w={8}><Caret /></CaretCell>
								<VSep $ml={8} />
								<Cell $w={32}><ParaIcon /></Cell>
								<CaretCell $w={8}><Caret /></CaretCell>
								<VSep $ml={7} $mr={4} />
								<Cell $w={26}><WrapIcon /></Cell>
								<SmallBtn $h={28} $ml={1}>Wrap Text</SmallBtn>
							</Row>
							<Row $h={26}>
								<Cell $w={26}><AlignLines rows={[[3, 17, 3], [3, 12, 7], [3, 17, 11], [3, 12, 15]]} /></Cell>
								<Cell $w={26}><AlignLines rows={[[3, 17, 3], [6, 14, 7], [3, 17, 11], [6, 14, 15]]} /></Cell>
								<Cell $w={26}><AlignLines rows={[[3, 17, 3], [8, 17, 7], [3, 17, 11], [8, 17, 15]]} /></Cell>
								<VSep $ml={4} $mr={4} />
								<Cell $w={26}><IndentIcon /></Cell>
								<Cell $w={26}><IndentIcon flip /></Cell>
								<VSep $ml={38} $mr={4} />
								<Cell $w={26}><MergeIcon /></Cell>
								<SmallBtn $h={26} $ml={1}>Merge &amp; Center<Caret $ml={10} /></SmallBtn>
							</Row>
						</Rows>
					</GroupBody>
					<GroupLabel $launcher>Alignment<LauncherIcon /></GroupLabel>
				</Group>

				<Group $w={161.5}>
					<GroupBody $pl={4.5}>
						<Rows>
							<Row $h={28}><Field $w={151}>General<Caret /></Field></Row>
							<Row $h={26}>
								<Cell $w={26}><CurrencyIcon /></Cell>
								<CaretCell $w={12}><Caret /></CaretCell>
								<Cell $w={28}><Glyph $size={18}>%</Glyph></Cell>
								<Cell $w={22}><Glyph $bold $size={17} $serif>,</Glyph></Cell>
								<VSep $ml={7} $mr={4} />
								<Cell $w={26}><DecimalIcon more /></Cell>
								<Cell $w={24}><DecimalIcon /></Cell>
							</Row>
						</Rows>
					</GroupBody>
					<GroupLabel $launcher>Number<LauncherIcon /></GroupLabel>
				</Group>

				<Group $w={457}>
					<GroupBody>
						<Large $w={94}>
							<LargeIcon $pl={3}><CondIcon /></LargeIcon>
							<TextLine>Conditional</TextLine>
							<TextLine>Formatting<Caret /></TextLine>
						</Large>
						<Large $w={64}>
							<LargeIcon $pl={6}><FormatTableIcon /></LargeIcon>
							<TextLine>Format as</TextLine>
							<TextLine>Table<Caret /></TextLine>
						</Large>
						<Gallery>
							<StyleCell $pad="1px 0 0 1px"><StyleChip $selected $bg="#fff" $color="#000" $pl={5}>Normal</StyleChip></StyleCell>
							<StyleCell $pad="5px 6px 4px 4px"><StyleChip $bg="#ffc7ce" $color="#9c0006">Bad</StyleChip></StyleCell>
							<GalleryScroll>
								<GalleryBtn $dim><UpTri $color="#aaa" /></GalleryBtn>
								<GalleryBtn><DownTri /></GalleryBtn>
								<GalleryBtn $last><DownTri /></GalleryBtn>
							</GalleryScroll>
							<StyleCell $pad="2px 4px 7px 4px"><StyleChip $bg="#c6efce" $color="#006100">Good</StyleChip></StyleCell>
							<StyleCell $pad="2px 6px 7px 4px"><StyleChip $bg="#ffeb9c" $color="#9c5700">Neutral</StyleChip></StyleCell>
						</Gallery>
					</GroupBody>
					<GroupLabel>Styles</GroupLabel>
				</Group>

				<Group $w={161.5}>
					<GroupBody $pl={5}>
						<Large $w={50}>
							<LargeIcon><InsertCellsIcon /></LargeIcon>
							<TextLine>Insert</TextLine>
							<TextLine><Caret /></TextLine>
						</Large>
						<Large $w={50}>
							<LargeIcon><DeleteCellsIcon /></LargeIcon>
							<TextLine>Delete</TextLine>
							<TextLine><Caret /></TextLine>
						</Large>
						<Large $w={52}>
							<LargeIcon><FormatCellsIcon /></LargeIcon>
							<TextLine>Format</TextLine>
							<TextLine><Caret /></TextLine>
						</Large>
					</GroupBody>
					<GroupLabel>Cells</GroupLabel>
				</Group>

				<Group $w={222}>
					<GroupBody>
						<SmallStack $w={109.5} $pl={9.5}>
							<SmallBtn $h={26}>
								<SmallIcon $mr={5}><Glyph $bold $size={22} $color="#555">Σ</Glyph></SmallIcon>AutoSum<Caret $ml={10} />
							</SmallBtn>
							<SmallBtn $h={27}><SmallIcon $mr={5}><FillDown /></SmallIcon>Fill<Caret $ml={3} /></SmallBtn>
							<SmallBtn $h={28}><SmallIcon $mr={5}><EraserIcon /></SmallIcon>Clear<Caret $ml={3} /></SmallBtn>
						</SmallStack>
						<Large $w={54}>
							<LargeIcon><SortIcon /></LargeIcon>
							<TextLine>Sort &amp;</TextLine>
							<TextLine>Filter<Caret /></TextLine>
						</Large>
						<Large $w={53}>
							<LargeIcon><FindIcon /></LargeIcon>
							<TextLine>Find &amp;</TextLine>
							<TextLine>Select<Caret /></TextLine>
						</Large>
					</GroupBody>
					<GroupLabel>Editing</GroupLabel>
				</Group>

				<Group $w={96}>
					<GroupBody>
						<Large $w={95}>
							<LargeIcon $pl={6}><PdfIcon /></LargeIcon>
							<TextLine>Create</TextLine>
							<TextLine>a PDF</TextLine>
						</Large>
					</GroupBody>
					<GroupLabel>Adobe Acrobat</GroupLabel>
				</Group>

				<CollapseArea><Chevron /></CollapseArea>
			</Ribbon>

			<SheetArea>
				<Sheet />
				<VScroll>
					<ScrollBtn><UpTri /></ScrollBtn>
					<VThumb />
					<Spacer />
					<ScrollBtn><DownTri /></ScrollBtn>
				</VScroll>
			</SheetArea>

			<SheetTabs>
				<NavArrows>
					<LeftTri $color="#c8c8c8" />
					<RightTri $color="#c8c8c8" />
				</NavArrows>
				<ActiveSheet>Trial Balance</ActiveSheet>
				<SheetName $w={240} $sep>Statement of Profit or Loss</SheetName>
				<SheetName $w={274} $sep>Statement of Financial Position</SheetName>
				<SheetName $w={69} $sep>Notes</SheetName>
				<AddSheet>+</AddSheet>
				<Grabber />
				<HScroll>
					<HBtn><LeftTri /></HBtn>
					<HThumb />
					<HBtn><RightTri /></HBtn>
				</HScroll>
			</SheetTabs>

			<StatusBar>
				<Ready>Ready</Ready>
				<ViewBtn $w={16}><MacroIcon /></ViewBtn>
				<Spacer />
				<ViewBtn $w={42} $on><NormalView /></ViewBtn>
				<ViewBtn $w={41}><PageView /></ViewBtn>
				<ViewBtn $w={42}><BreakView /></ViewBtn>
				<ViewBtn $w={20}><Glyph $size={20} $color="#666">−</Glyph></ViewBtn>
				<ZoomTrack><ZoomThumb /><ZoomTick /></ZoomTrack>
				<ViewBtn $w={18} $on><Glyph $size={20} $color="#555">+</Glyph></ViewBtn>
				<ZoomPct>60%</ZoomPct>
			</StatusBar>

			<Taskbar>
				<TaskIcon $mr={9}><StartIcon /></TaskIcon>
				<TaskIcon $mr={6}><TaskViewIcon /></TaskIcon>
				<TaskIcon $mr={8}><CopilotIcon /></TaskIcon>
				<TaskIcon $mr={6}><PowerBiIcon /></TaskIcon>
				<TaskIcon $mr={7}><EdgeIcon /><Dot /></TaskIcon>
				<TaskIcon $mr={7}><ShieldRingIcon /></TaskIcon>
				<TaskIcon $mr={8}><ChromeIcon /></TaskIcon>
				<TaskIcon $mr={6.5}><HexAppIcon /></TaskIcon>
				<TaskIcon $mr={7.5}><FaFacebook size={30} color="#1877f2" /></TaskIcon>
				<TaskIcon $mr={7}>
					<FaWhatsapp size={32} color="#1f8f4e" />
					<Badge>١٨</Badge>
				</TaskIcon>
				<TaskIcon $mr={6}><MLogo>M</MLogo></TaskIcon>
				<TaskIcon $mr={7.5}><FolderIcon /><Dot /></TaskIcon>
				<TaskIcon $on $mr={0}><ExcelLogo /><Dot $wide /></TaskIcon>
				<Tray>
					<TrayCaret />
					<TrayLang>ع</TrayLang>
					<TrayIcon><WifiIcon /></TrayIcon>
					<TrayIcon><SpeakerIcon /></TrayIcon>
					<TrayIcon><BatteryIcon /></TrayIcon>
					<Clock>
						<div>٠٧:٠٩ م</div>
						<div>٢٠٢٥/٠٨/٢٧</div>
					</Clock>
				</Tray>
			</Taskbar>

			<Watermark>
				<WatermarkAr>مستقل</WatermarkAr>
				<WatermarkEn>mostaql.com</WatermarkEn>
			</Watermark>
		</Frame>
	)
}
